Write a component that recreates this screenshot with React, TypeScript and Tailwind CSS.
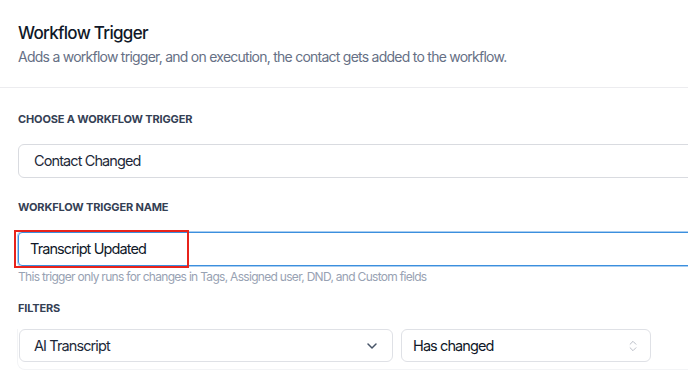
import { ChevronDown, ChevronsUpDown } from 'lucide-react';

const Label = ({ children }: { children: React.ReactNode }) => (
  <div className="text-[11px] font-bold uppercase tracking-[-0.15px] text-[#344054] leading-[12px]">
    {children}
  </div>
);

export default function App() {
  return (
    <div className="w-[688px] h-[381px] overflow-hidden bg-white font-['Inter',sans-serif]">
      {/* Header */}
      <div className="px-[18px] pt-[22px] pb-[20px] border-b border-[#ececef]">
        <h1 className="text-[17px] font-medium tracking-[-0.7px] text-[#101828] leading-[22px]">Workflow Trigger</h1>
        <p className="mt-[3px] text-[14px] tracking-[-0.75px] text-[#667085] leading-[20px]">
          Adds a workflow trigger, and on execution, the contact gets added to the workflow.
        </p>
      </div>

      <div className="pl-[18px]">
        {/* Trigger select */}
        <div className="pt-[25px]">
          <Label>Choose a workflow trigger</Label>
          <div className="mt-[19px] w-[720px] h-[34px] flex items-center pl-[15px] rounded-l-[6px] border border-[#d9dbe0] text-[14.5px] tracking-[-0.9px] text-[#1d2939]">
            Contact Changed
          </div>
        </div>

        {/* Trigger name */}
        <div className="pt-[23px]">
          <Label>Workflow trigger name</Label>
          <div className="relative mt-[19px]">
            <div className="w-[720px] h-[34px] flex items-center pl-[11px] rounded-l-[4px] border border-[#3b8fde] ring-1 ring-[#a9cdf0] text-[14.5px] tracking-[-0.9px] text-[#101828]">
              Transcript Updated
            </div>
            <div className="absolute left-[-4px] top-[-2px] w-[175px] h-[38px] border-2 border-[#e8231b] pointer-events-none" />
          </div>
          <p className="mt-[3px] text-[12px] tracking-[-0.7px] text-[#98a2b3] leading-[16px]">
            This trigger only runs for changes in Tags, Assigned user, DND, and Custom fields
          </p>
        </div>

        {/* Filters */}
        <div className="pt-[17px]">
          <Label>Filters</Label>
          <div className="mt-[15px] -ml-[1px] w-[700px] pl-[1px] pb-[7px] rounded-bl-[8px] border-b border-l border-[#f3f4f6]">
            <div className="flex gap-[8px]">
              <div className="w-[374px] h-[33px] flex items-center justify-between pl-[14px] pr-[12px] rounded-[6px] border border-[#dfe1e6] text-[14.5px] tracking-[-0.9px] text-[#1d2939]">
                <span>AI Transcript</span>
                <ChevronDown size={16} strokeWidth={2.25} className="text-[#475467]" />
              </div>
              <div className="w-[250px] h-[33px] flex items-center justify-between pl-[11px] pr-[10px] rounded-[6px] border border-[#dfe1e6] text-[14.5px] tracking-[-0.9px] text-[#101828]">
                <span>Has changed</span>
                <ChevronsUpDown size={14} strokeWidth={1.5} className="text-[#b0b5bf]" />
              </div>
            </div>
          </div>
        </div>
      </div>
    </div>
  );
}
